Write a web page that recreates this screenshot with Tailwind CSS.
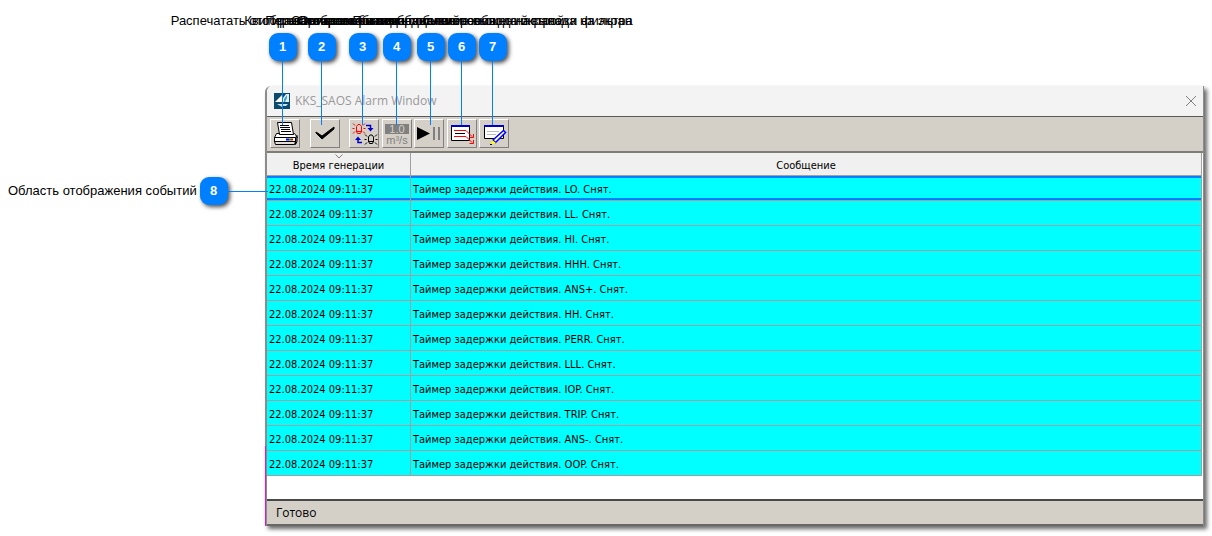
<!DOCTYPE html>
<html lang="ru">
<head>
<meta charset="utf-8">
<title>KKS_SAOS Alarm Window</title>
<script src="https://cdn.jsdelivr.net/npm/@tailwindcss/browser@4"></script>
</head>
<body class="relative min-h-screen bg-white overflow-x-hidden text-black font-['Liberation_Sans',sans-serif]">

<main class="pl-[265px] pr-2 pt-[86px]">
  <section class="relative flex flex-col rounded-tl-md border-l-2 border-[#8c8c8c] border-r border-r-[#8c8c8c] bg-white shadow-[3px_3px_4px_rgba(0,0,0,0.6)]">
    <span class="absolute -left-[2px] bottom-0 h-20 w-px bg-[#d818d8]"></span>
    <header class="flex h-[31px] items-center border-b border-[#5a5a5a] bg-[#f3f3f3] pl-[7px] pr-[6px] rounded-tl-md">
      <svg class="size-4" viewBox="0 0 16 16" aria-hidden="true"><rect width="16" height="16" fill="#0b4a6b"/><path d="M1 9 8 2v7z" fill="#fff"/><path d="M9 9V5l3-4h3v8z" fill="#e4f1f7"/><path d="M10 9V6l3-4v3l-2 4z" fill="#4a9cc0"/><path d="M3 11h5v3zM9 11h5l-2 2H9z" fill="#c9e2ee"/></svg>
      <h1 class="ml-[5px] flex-1 text-[12px] leading-4 text-[#999] font-['Open_Sans',sans-serif]">KKS_SAOS Alarm Window</h1>
      <button type="button" aria-label="Закрыть" class="size-3"><svg viewBox="0 0 12 12" class="size-3"><path d="M1 1l10 10M11 1 1 11" stroke="#808080" fill="none"/></svg></button>
    </header>

    <div class="flex h-9 items-start border-b-2 border-[#7e7c74] bg-[#d4d0c8] pl-[3px] pt-[2px]" role="toolbar" aria-label="Панель инструментов">
      <button type="button" aria-label="Печать" class="h-[29px] w-[30px] border border-t-white border-l-white border-r-[#808080] border-b-[#808080]">
        <svg width="28" height="27" viewBox="0 0 28 27"><path d="M6.500 2.500h14l2 12h-14z" fill="#fff" stroke="#000"/><path d="M9 5.500h9M9 7.500h10M10 9.500h9M10 11.500h10" stroke="#000"/><path d="M5.500 13.500h3v1h14l1-1 3 4h-23z" fill="#fff" stroke="#000"/><path d="M3.500 17.500h21v4h-21z" fill="#fff" stroke="#000"/><path d="M24.500 17.500l1.500-2v6l-1.500 3z" fill="#808080" stroke="#000"/><path d="M3.500 21.500h21l-1 3h-19z" fill="#e4e0d8" stroke="#000"/><path d="M15 19.500h3" stroke="#00f" stroke-width="2"/><path d="M18 19.500h2" stroke="#0a0" stroke-width="2"/><path d="M20 19.500h2" stroke="#f00" stroke-width="2"/></svg>
      </button>
      <button type="button" aria-label="Квитировать" class="ml-[10px] h-[29px] w-[30px] border border-t-white border-l-white border-r-[#808080] border-b-[#808080]">
        <svg width="28" height="27" viewBox="0 0 28 27"><path d="M5 12l6 4L23 7v2L11 19l-6-6z" fill="#000" stroke="#000"/></svg>
      </button>
      <button type="button" aria-label="Переключить режим" class="ml-[9px] h-[29px] w-[30px] border border-t-white border-l-white border-r-[#808080] border-b-[#808080]">
        <svg width="28" height="27" viewBox="0 0 28 27" fill="none"><g stroke="#f00"><path d="M6.500 6.500l1.500-2h2l1.500 2v5l-1 2h-3l-1-2z"/><path d="M6 11.500h6" stroke-width="1"/><path d="M3 3.500l2 2M2.500 8.500H4.500M3 13.500l2-2M15 3.500l-2 2M13.500 8.500h2M15 13.500l-2-2"/></g><g stroke="#000"><path d="M18.500 17l1.500-2h2l1.500 2v4l-1 2.500h-3l-1-2.500z"/><path d="M18 21.500h6"/><path d="M15 14.500l2 2M14.500 19.500h2M15 24.500l2-2M27 14.500l-2 2M25.500 19.500h2M27 24.500l-2-2"/></g><path d="M16 5.500h4.500V9M12 22.500H8V20" stroke="#00c" stroke-width="1.500"/><path d="M17.500 8h6l-3 3.500zM5 20h6l-3-3.500z" fill="#00c"/></svg>
      </button>
      <button type="button" aria-label="Единицы измерения" class="ml-[3px] flex h-[29px] w-[30px] flex-col items-center border border-t-white border-l-white border-r-[#808080] border-b-[#808080] pt-1 font-['Liberation_Sans',sans-serif] text-[11px] text-[#808080]">
        <span class="block h-[10px] w-6 bg-[#808080] text-center leading-[10px] text-[#d4d0c8]">1.0</span>
        <span class="block leading-3">m³/s</span>
      </button>
      <button type="button" aria-label="Пауза" class="ml-[2px] h-[29px] w-[30px] border border-t-white border-l-white border-r-[#808080] border-b-[#808080]">
        <svg width="28" height="27" viewBox="0 0 28 27"><path d="M2 7l13 6.500L2 20z" fill="#000"/><path d="M18 7h2v13h-2zM23 7h2v13h-2z" fill="#808080"/></svg>
      </button>
      <button type="button" aria-label="Сортировка" class="ml-[3px] h-[29px] w-[30px] border border-t-white border-l-white border-r-[#808080] border-b-[#808080]">
        <svg width="28" height="27" viewBox="0 0 28 27"><path d="M3.500 6.500h18v14h-18z" fill="#fff" stroke="#000"/><path d="M3 6h19" stroke="#00c" stroke-width="2"/><path d="M7 13.500h10" stroke="#000"/><path d="M6 10.500h12l6 6M6 16.500h12l6 6" fill="none" stroke="#f00"/><path d="M25.500 14v3.500h-4M25.500 20v3.500h-4" fill="none" stroke="#f00"/></svg>
      </button>
      <button type="button" aria-label="Фильтр" class="ml-[2px] h-[29px] w-[30px] border border-t-white border-l-white border-r-[#808080] border-b-[#808080]">
        <svg width="28" height="27" viewBox="0 0 28 27"><path d="M4.500 6.500h19v12h-19z" fill="#fff" stroke="#000"/><path d="M4 6h20" stroke="#00c" stroke-width="2"/><path d="M7 11.500h12M7 14.500h9" stroke="#bbb"/><path d="M13 20 23.500 10.500l2 2L15.500 22.500z" fill="#fff" stroke="#00f" stroke-width="1.500"/><path d="M12 20l4 3-5 1.500z" fill="#ff0"/><path d="M10 24h2v1h-2z" fill="#000"/></svg>
      </button>
    </div>

    <div class="pr-px pb-[23px]">
    <table class="w-full table-fixed border-separate border-spacing-0 text-left text-[11px] leading-4 font-['DejaVu_Sans_Condensed','DejaVu_Sans',sans-serif]">
      <colgroup><col class="w-[144px]"><col></colgroup>
      <thead>
        <tr class="h-[23px] bg-[#f0f0f0]">
          <th scope="col" class="relative border-r border-b border-[#a0a0a0] p-0 pt-[3px] text-center font-normal"><svg class="absolute top-px left-[68px]" width="8" height="5" viewBox="0 0 8 5"><path d="M.5.500 4 4 7.500.500" fill="none" stroke="#808080"/></svg>Время генерации</th>
          <th scope="col" class="border-r border-b border-[#a0a0a0] p-0 pt-[3px] text-center font-normal">Сообщение</th>
        </tr>
      </thead>
      <tbody class="[&_td]:h-[25px] [&_td]:border-r [&_td]:border-b [&_td]:border-[#a0a0a0] [&_td]:bg-[#00ffff] [&_td]:pt-[3px] [&_td]:pb-0 [&_td]:pr-0 [&_td]:pl-[2px]">
        <tr class="[&_td]:shadow-[inset_0_2px_#0080ff,inset_0_-2px_#0080ff]"><td>22.08.2024 09:11:37</td><td>Таймер задержки действия. LO. Снят.</td></tr>
        <tr><td>22.08.2024 09:11:37</td><td>Таймер задержки действия. LL. Снят.</td></tr>
        <tr><td>22.08.2024 09:11:37</td><td>Таймер задержки действия. HI. Снят.</td></tr>
        <tr><td>22.08.2024 09:11:37</td><td>Таймер задержки действия. HHH. Снят.</td></tr>
        <tr><td>22.08.2024 09:11:37</td><td>Таймер задержки действия. ANS+. Снят.</td></tr>
        <tr><td>22.08.2024 09:11:37</td><td>Таймер задержки действия. HH. Снят.</td></tr>
        <tr><td>22.08.2024 09:11:37</td><td>Таймер задержки действия. PERR. Снят.</td></tr>
        <tr><td>22.08.2024 09:11:37</td><td>Таймер задержки действия. LLL. Снят.</td></tr>
        <tr><td>22.08.2024 09:11:37</td><td>Таймер задержки действия. IOP. Снят.</td></tr>
        <tr><td>22.08.2024 09:11:37</td><td>Таймер задержки действия. TRIP. Снят.</td></tr>
        <tr><td>22.08.2024 09:11:37</td><td>Таймер задержки действия. ANS-. Снят.</td></tr>
        <tr><td>22.08.2024 09:11:37</td><td>Таймер задержки действия. OOP. Снят.</td></tr>
      </tbody>
    </table>
    </div>

    <footer class="flex h-[27px] items-center border-t-2 border-b-2 border-t-[#484848] border-b-[#686864] bg-[#d4d0c8] pl-[9px] text-[12px] leading-4 font-['Open_Sans',sans-serif]">Готово</footer>
  </section>
</main>

<!-- Callouts over the window -->
<div class="text-[13px] leading-4 whitespace-nowrap [&_b]:flex [&_b]:size-7 [&_b]:items-center [&_b]:justify-center [&_b]:rounded-[9px] [&_b]:bg-[#0080ff] [&_b]:text-white [&_b]:shadow-[2px_2px_4px_rgba(0,0,0,0.7)] [&_i]:bg-[#0080ff]">
  <div class="pointer-events-none absolute top-[13px] left-[282px] flex w-px flex-col items-center"><span class="mb-1">Распечатать отображаемые события</span><b>1</b><i class="h-16 w-px"></i></div>
  <div class="pointer-events-none absolute top-[13px] left-[321px] flex w-px flex-col items-center"><span class="mb-1">Квитировать все события</span><b>2</b><i class="h-16 w-px"></i></div>
  <div class="pointer-events-none absolute top-[13px] left-[362px] flex w-px flex-col items-center"><span class="mb-1">Переключение режима событий</span><b>3</b><i class="h-16 w-px"></i></div>
  <div class="pointer-events-none absolute top-[13px] left-[396px] flex w-px flex-col items-center"><span class="mb-1">Отображение единиц измерения</span><b>4</b><i class="h-16 w-px"></i></div>
  <div class="pointer-events-none absolute top-[13px] left-[430px] flex w-px flex-col items-center"><span class="mb-1">Остановка и возобновление вывода экрана</span><b>5</b><i class="h-16 w-px"></i></div>
  <div class="pointer-events-none absolute top-[13px] left-[461px] flex w-px flex-col items-center"><span class="mb-1">Сортировка и отображение сообщений вывода на экран</span><b>6</b><i class="h-16 w-px"></i></div>
  <div class="pointer-events-none absolute top-[13px] left-[492px] flex w-px flex-col items-center"><span class="mb-1">Показать диалоговое окно настройки фильтра</span><b>7</b><i class="h-16 w-px"></i></div>
  <div class="pointer-events-none absolute top-[177px] left-2 flex items-center"><span class="mr-[3px]">Область отображения событий</span><b>8</b><i class="h-px w-10"></i></div>
</div>
</body>
</html>
